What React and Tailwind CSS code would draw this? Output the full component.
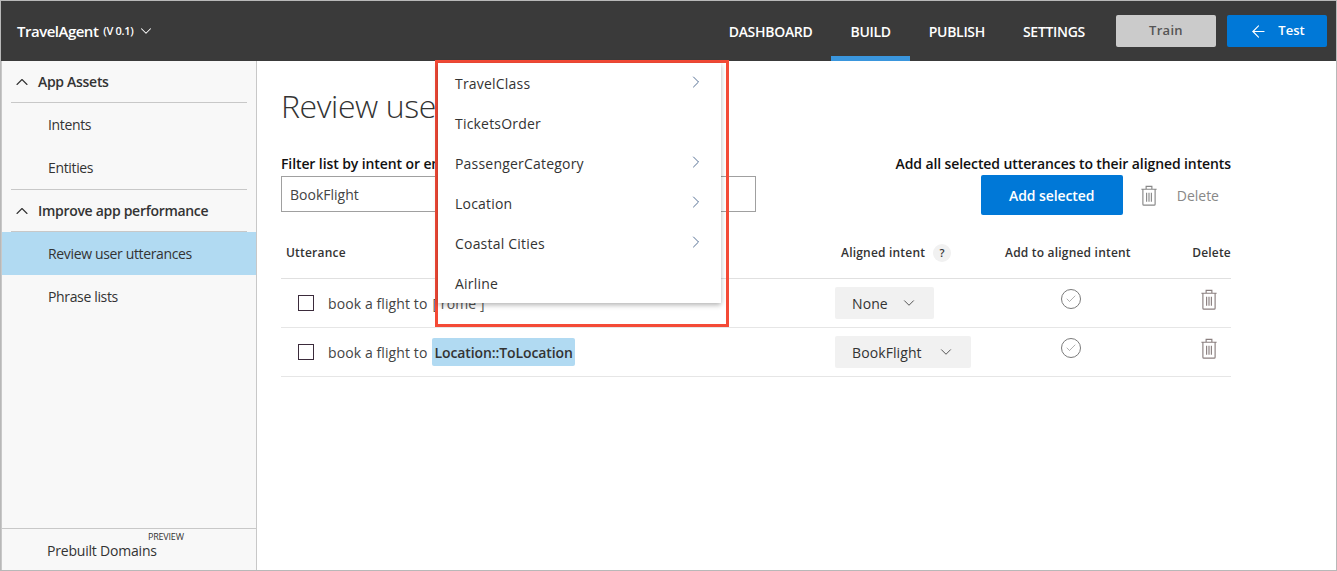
import { ChevronDown, ChevronUp, ChevronRight, ArrowLeft, Check } from 'lucide-react'

const font = { fontFamily: '"Open Sans", "Noto Sans", sans-serif' }

function TrashIcon({ className }) {
  return (
    <svg viewBox="0 0 18 22" fill="none" stroke="currentColor" strokeWidth="1.2" className={className}>
      <path d="M1 4.5h16M6 4.5V1.5h6v3M2.6 4.5v15.6c0 .6.5 1 1 1h10.8c.5 0 1-.4 1-1V4.5" />
      <path d="M6.5 8v9.5M9 8v9.5M11.5 8v9.5" />
    </svg>
  )
}

function CheckCircle() {
  return (
    <div className="flex h-5 w-5 items-center justify-center rounded-full border border-[#7a7a7a] text-[#7a7a7a]">
      <Check size={12} strokeWidth={1.2} />
    </div>
  )
}

function NavItem({ children, active }) {
  return (
    <div className={`relative flex h-[60px] items-center justify-center px-[19px] text-[14px] font-semibold tracking-[-0.3px] text-white`}>
      {children}
      {active && <div className="absolute bottom-0 left-0 right-0 h-[5px] bg-[#3a96dd]" />}
    </div>
  )
}

function SideHeader({ children }) {
  return (
    <div className="mx-[9px] flex h-[42px] items-center border-b border-[#c8c8c8] text-[14px] font-semibold tracking-[-0.3px] text-[#333]">
      <ChevronUp size={20} strokeWidth={1.3} className="ml-[1px] mr-[6px] text-[#333]" />
      {children}
    </div>
  )
}

function SideItem({ children, active }) {
  return (
    <div className={`flex h-[43px] items-center pl-[46px] text-[14px] tracking-[-0.35px] text-[#333] ${active ? 'bg-[#b1daf2]' : ''}`}>
      {children}
    </div>
  )
}

function Row({ label, intentLabel, intentWidth }) {
  return (
    <div className="grid h-[49px] grid-cols-[554px_170px_1fr_60px] items-center border-b border-[#e6e6e6] text-[14px] text-[#444]">
      <div className="flex items-center pl-[17px]">
        <div className="mr-[14px] h-4 w-4 border border-[#3b2b3b]" />
        <span className="mr-[5px] tracking-[0.1px]">book a flight to</span>
        {label}
      </div>
      <div>
        <div className={`flex h-8 items-center justify-between rounded-[2px] bg-[#f1f1f1] pl-[17px] pr-[16px] tracking-[0.1px] text-[#333] ${intentWidth}`}>
          {intentLabel}
          <ChevronDown size={18} strokeWidth={1.1} />
        </div>
      </div>
      <div className="flex justify-center pr-[34px] pb-[8px]">
        <CheckCircle />
      </div>
      <div className="flex justify-end pr-[13px] pb-[8px]">
        <TrashIcon className="h-[21px] w-[18px] text-[#8a7f7f]" />
      </div>
    </div>
  )
}

function MenuItem({ children, arrow }) {
  return (
    <div className="flex h-10 items-center justify-between pl-[17px] pr-[15px] text-[14px] font-medium tracking-[0.2px] text-[#333]">
      {children}
      {arrow && <ChevronRight size={20} strokeWidth={1.1} className="mb-[2px] text-[#44618a]" />}
    </div>
  )
}

export default function App() {
  return (
    <div style={font} className="relative flex h-[571px] w-[1337px] flex-col overflow-hidden border border-[#b8b8b8] bg-white">
      <header className="flex h-[60px] shrink-0 items-center justify-between bg-[#3a3a3a] pl-[16px] pr-[9px]">
        <div className="flex items-center text-white">
          <span className="text-[15px] font-semibold tracking-[-0.5px]">TravelAgent</span>
          <span className="ml-[5px] mt-[1px] text-[11px] font-semibold tracking-[-0.3px]">(V 0.1)</span>
          <ChevronDown size={18} strokeWidth={1.4} className="ml-[3px]" />
        </div>
        <div className="flex items-center">
          <nav className="flex">
            <NavItem>DASHBOARD</NavItem>
            <NavItem active>BUILD</NavItem>
            <NavItem>PUBLISH</NavItem>
            <NavItem>SETTINGS</NavItem>
          </nav>
          <button className="ml-[12px] h-8 w-[100px] rounded-[2px] bg-[#cbcbcb] text-[13px] font-semibold tracking-[0.3px] text-[#555]">Train</button>
          <button className="ml-[11px] flex h-8 w-[100px] items-center justify-center gap-[10px] rounded-[2px] bg-[#0078d7] text-[13px] font-semibold text-white">
            <ArrowLeft size={19} strokeWidth={1.4} />
            Test
          </button>
        </div>
      </header>

      <div className="flex min-h-0 flex-1">
        <aside className="flex w-[256px] shrink-0 flex-col border-r border-[#c8c8c8] border-l-[1px] bg-[#f8f8f8]">
          <div className="flex-1">
            <SideHeader>App Assets</SideHeader>
            <SideItem>Intents</SideItem>
            <SideItem>Entities</SideItem>
            <div className="h-[0px]" />
            <div className="mx-[9px] border-t border-[#c8c8c8]" />
            <SideHeader>Improve app performance</SideHeader>
            <SideItem active>Review user utterances</SideItem>
            <SideItem>Phrase lists</SideItem>
          </div>
          <div className="relative h-[42px] border-t border-[#c8c8c8] pl-[45px] pt-[13px] text-[14px] font-medium leading-[18px] tracking-[-0.2px] text-[#333]">
            Prebuilt Domains
            <span className="absolute left-[146px] top-[2px] text-[9px] font-normal leading-[12px] text-[#333]">PREVIEW</span>
          </div>
        </aside>

        <main className="min-w-0 flex-1 pl-[24px] pr-[105px]">
          <h1 className="mt-[21px] h-[48px] text-[32px] font-light leading-[48px] tracking-[-0.4px] text-[#333]">Review user utterances</h1>
          <div className="mt-[22px] flex h-[22px] items-center justify-between text-[14px] font-semibold tracking-[-0.1px] text-[#111]">
            <span>Filter list by intent or entity</span>
            <span>Add all selected utterances to their aligned intents</span>
          </div>
          <div className="mt-[1px] flex items-start justify-between">
            <input
              readOnly
              value="BookFlight"
              className="mt-[1px] h-[36px] w-[475px] border border-[#a0a0a0] px-2 text-[14px] text-[#444] outline-none"
              style={font}
            />
            <div className="flex items-center pr-[12px]">
              <button className="h-10 w-[142px] rounded-[2px] bg-[#0078d7] text-[14px] font-semibold tracking-[-0.1px] text-white">Add selected</button>
              <TrashIcon className="ml-[17px] mr-[19px] h-[21px] w-[18px] text-[#888]" />
              <span className="text-[14px] font-medium text-[#888]">Delete</span>
            </div>
          </div>

          <div className="mt-[21px] grid h-[43px] grid-cols-[554px_170px_1fr_60px] items-center border-b border-[#e0e0e0] pb-[8px] text-[12px] font-semibold tracking-[0.2px] text-[#333]">
            <span className="pl-[5px]">Utterance</span>
            <span className="flex items-center pl-[6px]">
              Aligned intent
              <span className="ml-[8px] flex h-[18px] w-[18px] items-center justify-center rounded-full bg-[#f1f1f1] text-[11px]">?</span>
            </span>
            <span>Add to aligned intent</span>
            <span className="text-right">Delete</span>
          </div>
          <Row
            label={<span className="ml-[0px] tracking-[0.1px] text-[#555]">[ rome ]</span>}
            intentLabel="None"
            intentWidth="w-[99px]"
          />
          <Row
            label={<span className="flex h-7 items-center rounded-[2px] bg-[#b1daf2] px-[2px] font-semibold tracking-[-0.1px] text-[#333]">Location::ToLocation</span>}
            intentLabel="BookFlight"
            intentWidth="w-[136px]"
          />
        </main>
      </div>

      {/* entity picker, lies over the page */}
      <div className="absolute left-[434px] top-[59px] h-[267px] w-[294px] border-[3px] border-[#f44a36] border-r-[3px]">
        <div className="mx-[0px] w-[283px] bg-white shadow-[0_2px_5px_rgba(0,0,0,0.3)]">
          <MenuItem arrow>TravelClass</MenuItem>
          <MenuItem>TicketsOrder</MenuItem>
          <MenuItem arrow>PassengerCategory</MenuItem>
          <MenuItem arrow>Location</MenuItem>
          <MenuItem arrow>Coastal Cities</MenuItem>
          <MenuItem>Airline</MenuItem>
        </div>
      </div>
    </div>
  )
}
